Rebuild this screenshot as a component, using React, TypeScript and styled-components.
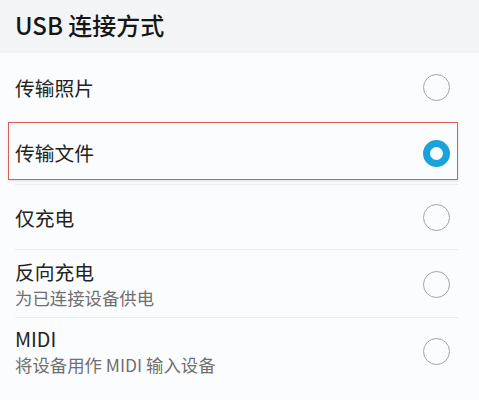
import React from "react";
import styled, { createGlobalStyle } from "styled-components";

const Global = createGlobalStyle`
  html, body { margin: 0; padding: 0; background: #fbfcfd; }
  body { font-family: "Noto Sans CJK SC", "Noto Sans", sans-serif; }
`;

const Page = styled.div`
  width: 479px;
  height: 400px;
  overflow: hidden;
  background: #fbfcfd;
  display: flex;
  flex-direction: column;
`;

const Header = styled.div`
  height: 53px;
  flex: none;
  background: #f3f4f6;
  display: flex;
  align-items: center;
  padding-left: 15px;
  box-sizing: border-box;
`;

const Title = styled.h1`
  margin: 0;
  font-size: 24px;
  font-weight: 500;
  color: #161616;
  line-height: 1;
  transform: translateY(-2px);
`;

const List = styled.div`
  display: flex;
  flex-direction: column;
  padding-top: 1px;
`;

const Row = styled.div<{ $h: number; $line: boolean }>`
  position: relative;
  height: ${(p) => p.$h}px;
  display: flex;
  align-items: center;
  justify-content: space-between;
  padding: 0 29px 0 15px;
  box-sizing: border-box;
  &::after {
    content: "";
    display: ${(p) => (p.$line ? "block" : "none")};
    position: absolute;
    left: 15px;
    right: 21px;
    bottom: 0;
    height: 1px;
    background: #ebecee;
  }
`;

const Highlight = styled.div`
  position: absolute;
  left: 8px;
  top: 1px;
  width: 450px;
  height: 58px;
  box-sizing: border-box;
  border: 1.5px solid #d45f57;
  box-shadow: 0 1px 3px rgba(0, 0, 0, 0.12);
  pointer-events: none;
`;

const Texts = styled.div`
  display: flex;
  flex-direction: column;
  gap: 5px;
`;

const Label = styled.div`
  font-size: 19.8px;
  color: #222;
  line-height: 22px;
`;

const Sub = styled.div`
  font-size: 17.4px;
  color: #6f6f6f;
  line-height: 20px;
`;

const Radio = styled.div<{ $on?: boolean }>`
  width: 27px;
  height: 27px;
  border-radius: 50%;
  box-sizing: border-box;
  flex: none;
  border: ${(p) => (p.$on ? "7.5px solid #1aa3da" : "1.3px solid #a3a3a3")};
`;

type Item = { label: string; sub?: string; h: number; line: boolean; on?: boolean };

const items: Item[] = [
  { label: "传输照片", h: 67, line: false },
  { label: "传输文件", h: 64, line: true, on: true },
  { label: "仅充电", h: 65, line: true },
  { label: "反向充电", sub: "为已连接设备供电", h: 68, line: true },
  { label: "MIDI", sub: "将设备用作 MIDI 输入设备", h: 67, line: false },
];

export default function App() {
  return (
    <Page>
      <Global />
      <Header>
        <Title>USB 连接方式</Title>
      </Header>
      <List>
        {items.map((it) => (
          <Row key={it.label} $h={it.h} $line={it.line}>
            {it.on && <Highlight />}
            <Texts>
              <Label>{it.label}</Label>
              {it.sub && <Sub>{it.sub}</Sub>}
            </Texts>
            <Radio $on={it.on} />
          </Row>
        ))}
      </List>
    </Page>
  );
}
